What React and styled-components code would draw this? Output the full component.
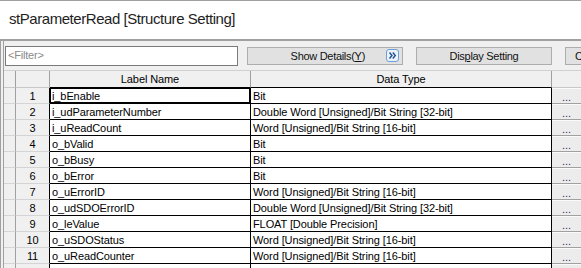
import React from "react";
import styled, { createGlobalStyle } from "styled-components";

const GlobalStyle = createGlobalStyle`
  html, body { margin: 0; padding: 0; background: #ffffff; }
  body { font-family: "Liberation Sans", Arial, sans-serif; }
  * { box-sizing: border-box; }
`;

const Window = styled.div`
  width: 581px;
  height: 268px;
  overflow: hidden;
  background: #ffffff;
  display: flex;
  flex-direction: column;
`;

const TitleBar = styled.div`
  height: 39px;
  flex: none;
  border-top: 1px solid #a0a0a0;
  display: flex;
  align-items: center;
  padding-left: 9px;
  padding-bottom: 3px;
`;

const Title = styled.div`
  font-size: 15px;
  letter-spacing: -0.45px;
  color: #1e1e1e;
  white-space: nowrap;
`;

const Panel = styled.div`
  flex: 1;
  min-height: 0;
  background: #f0f0f0;
  border-top: 2px solid #a0a0a0;
  border-left: 1px solid #a0a0a0;
  display: flex;
`;

const Inner = styled.div`
  flex: 1;
  min-width: 0;
  margin-left: 2px;
  border-left: 1px solid #a0a0a0;
  display: flex;
  flex-direction: column;
  overflow: hidden;
`;

const Toolbar = styled.div`
  height: 29px;
  flex: none;
  display: flex;
  align-items: center;
  padding-left: 1px;
  gap: 13px;
  white-space: nowrap;
`;

const FilterBox = styled.div`
  width: 233px;
  height: 20px;
  flex: none;
  background: #ffffff;
  border: 1px solid #7a7a7a;
  color: #8a8a8a;
  font-size: 11px;
  letter-spacing: -0.2px;
  line-height: 17px;
  padding-left: 2px;
  margin-right: -4px;
`;

const ToolButton = styled.div`
  width: ${(p) => p.$w}px;
  height: 18px;
  flex: none;
  background: #e1e1e1;
  border: 1px solid #adadad;
  font-size: 11px;
  letter-spacing: -0.3px;
  color: #111;
  display: flex;
  align-items: center;
  justify-content: ${(p) => p.$justify || "center"};
  padding-right: ${(p) => (p.$justify === "flex-end" ? 3 : 0)}px;
  padding-left: ${(p) => (p.$justify === "flex-start" ? 9 : 0)}px;
  gap: 21px;
  overflow: hidden;
`;

const Key = styled.span`
  text-decoration: underline;
`;

const Grid = styled.div`
  display: flex;
  flex-direction: column;
  border-top: 1px solid #d0d0d0;
  font-size: 11px;
  letter-spacing: -0.1px;
  color: #000;
`;

const Row = styled.div`
  display: flex;
  height: ${(p) => (p.$header ? 17 : 16)}px;
  flex: none;
`;

const Cell = styled.div`
  flex: none;
  width: ${(p) => p.$w}px;
  height: 100%;
  background: ${(p) => p.$bg || "#ffffff"};
  border-right: 1px solid ${(p) => p.$rc || "#000"};
  border-bottom: 1px solid ${(p) => p.$bc || "#000"};
  display: flex;
  align-items: center;
  justify-content: ${(p) => p.$align || "flex-start"};
  padding-left: ${(p) => (p.$align ? 0 : 2)}px;
  white-space: nowrap;
  overflow: hidden;
  line-height: 14px;
  box-shadow: ${(p) => (p.$focus ? "inset 0 0 0 1px #000" : "none")};
`;

const DotCell = styled.div`
  flex: none;
  width: 32px;
  height: 100%;
  background: #ececec;
  border-top: 1px solid #fafafa;
  border-bottom: 1px solid #a0a0a0;
  display: flex;
  align-items: flex-end;
  padding-left: 10px;
  font-size: 11px;
  line-height: 11px;
  color: #4a1a6a;
  letter-spacing: 0;
`;

const HeadBlank = styled.div`
  flex: none;
  width: 32px;
  height: 100%;
  background: #f0f0f0;
  border-bottom: 1px solid #c8c8c8;
`;

const ExpandIcon = () => (
  <svg width="13" height="13" viewBox="0 0 13 13" style={{ flex: "none" }}>
    <rect x="0.5" y="0.5" width="12" height="12" rx="2.5" fill="#eaf3fc" stroke="#6f9fd4" />
    <path d="M3.5 3.5 L6 6.5 L3.5 9.5 M6.8 3.5 L9.3 6.5 L6.8 9.5" fill="none" stroke="#1f4f8f" strokeWidth="1.4" />
  </svg>
);

const rows = [
  ["i_bEnable", "Bit"],
  ["i_udParameterNumber", "Double Word [Unsigned]/Bit String [32-bit]"],
  ["i_uReadCount", "Word [Unsigned]/Bit String [16-bit]"],
  ["o_bValid", "Bit"],
  ["o_bBusy", "Bit"],
  ["o_bError", "Bit"],
  ["o_uErrorID", "Word [Unsigned]/Bit String [16-bit]"],
  ["o_udSDOErrorID", "Double Word [Unsigned]/Bit String [32-bit]"],
  ["o_leValue", "FLOAT [Double Precision]"],
  ["o_uSDOStatus", "Word [Unsigned]/Bit String [16-bit]"],
  ["o_uReadCounter", "Word [Unsigned]/Bit String [16-bit]"],
  ["", ""],
];

export default function App() {
  return (
    <>
      <GlobalStyle />
      <Window>
        <TitleBar>
          <Title>stParameterRead [Structure Setting]</Title>
        </TitleBar>
        <Panel>
          <Inner>
            <Toolbar>
              <FilterBox>&lt;Filter&gt;</FilterBox>
              <ToolButton $w={156} $justify="flex-end">
                <span>
                  Show Details(<Key>Y</Key>)
                </span>
                <ExpandIcon />
              </ToolButton>
              <ToolButton $w={136}>
                <span>
                  Dis<Key>p</Key>lay Setting
                </span>
              </ToolButton>
              <ToolButton $w={80} $justify="flex-start">
                <span>Check</span>
              </ToolButton>
            </Toolbar>
            <Grid>
              <Row $header>
                <Cell $w={12} $bg="#f0f0f0" $rc="#a0a0a0" $bc="#c8c8c8" />
                <Cell $w={34} $bg="#f0f0f0" $rc="#a0a0a0" $bc="#c8c8c8" />
                <Cell $w={201} $bg="#f0f0f0" $rc="#a0a0a0" $align="center">
                  Label Name
                </Cell>
                <Cell $w={301} $bg="#f0f0f0" $rc="#a0a0a0" $align="center">
                  Data Type
                </Cell>
                <HeadBlank />
              </Row>
              {rows.map(([label, type], i) => (
                <Row key={i}>
                  <Cell $w={12} $bg="#f0f0f0" $rc="#a0a0a0" $bc="#d4d4d4" />
                  <Cell $w={34} $bg="#f0f0f0" $bc="#d4d4d4" $align="center">
                    {label ? i + 1 : ""}
                  </Cell>
                  <Cell $w={201} $focus={i === 0}>
                    {label}
                  </Cell>
                  <Cell $w={301}>{type}</Cell>
                  <DotCell>{label ? "..." : ""}</DotCell>
                </Row>
              ))}
            </Grid>
          </Inner>
        </Panel>
      </Window>
    </>
  );
}
